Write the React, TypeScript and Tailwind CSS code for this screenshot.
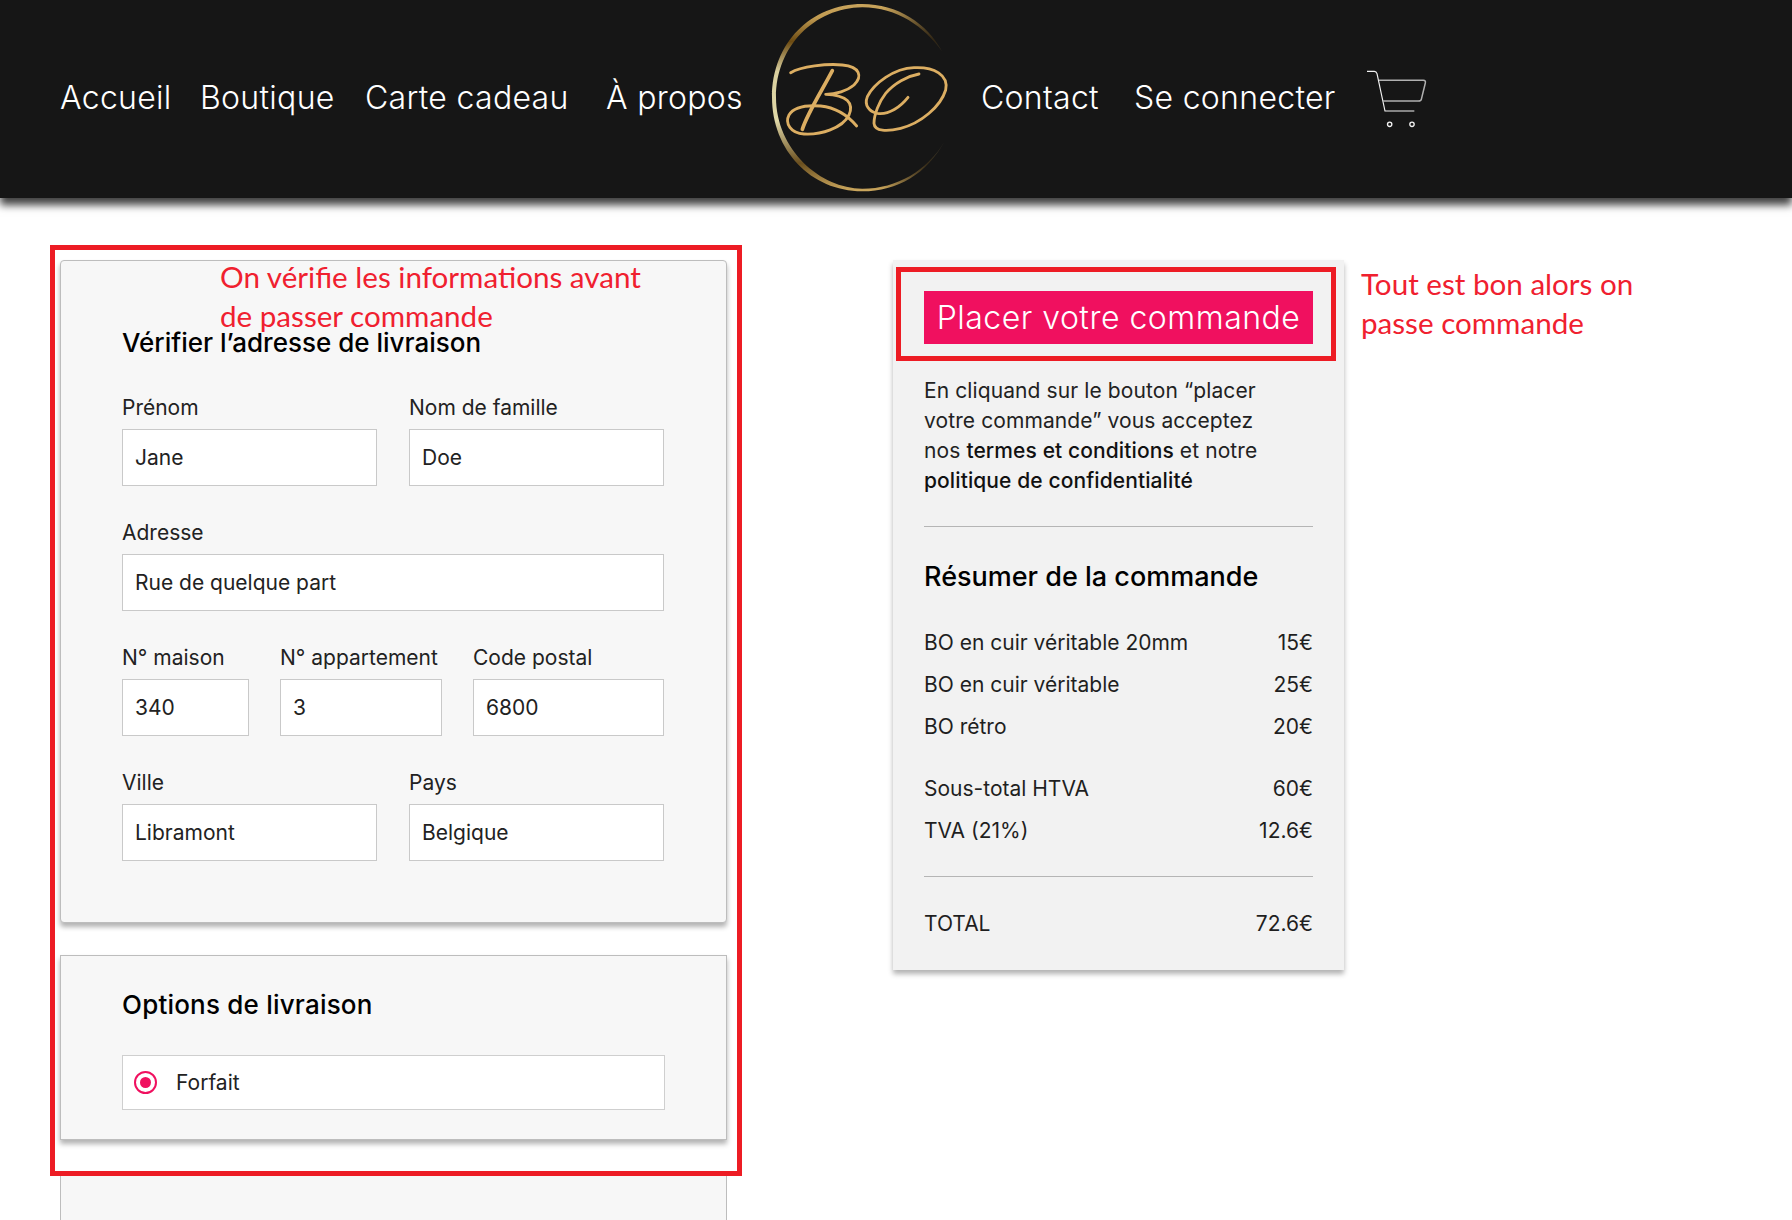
import React from 'react';

const Logo = () => (
  <svg width="200" height="198" viewBox="0 0 600 594" fill="none" aria-label="Logo BO" className="shrink-0">
    <defs>
      <linearGradient id="ring" gradientUnits="userSpaceOnUse" x1="0" y1="12" x2="0" y2="574">
        <stop offset="0" stopColor="#c9a45c" />
        <stop offset="0.07" stopColor="#c29c52" />
        <stop offset="0.2" stopColor="#6b4a12" />
        <stop offset="0.36" stopColor="#d9cf9e" />
        <stop offset="0.62" stopColor="#e0d8a8" />
        <stop offset="0.85" stopColor="#6a4f1f" />
        <stop offset="1" stopColor="#cda95f" />
      </linearGradient>
      <linearGradient id="fade" gradientUnits="userSpaceOnUse" x1="360" y1="0" x2="545" y2="0">
        <stop offset="0" stopColor="#fff" />
        <stop offset="1" stopColor="#fff" stopOpacity="0.15" />
      </linearGradient>
      <mask id="ringMask" maskUnits="userSpaceOnUse" x="0" y="0" width="600" height="594">
        <rect width="600" height="594" fill="url(#fade)" />
      </mask>
    </defs>
    <path
      mask="url(#ringMask)"
      fill="url(#ring)"
      d="M535 155 C490 70 400 12 295 12 C140 12 24 130 24 292 C24 450 140 574 295 574 C400 574 490 520 541 425 C490 510 400 566 295 566 C170 566 36 450 36 292 C36 140 150 24 295 22 C400 22 480 80 535 155Z"
    />
    <g stroke="#dcae62" strokeLinecap="round" strokeLinejoin="round">
      <path strokeWidth="8.5" d="M80 218 C110 200 190 190 235 195 C290 200 295 230 270 255 C250 272 215 283 185 283 C250 285 270 310 255 345 C235 385 170 405 120 402 C80 400 62 370 75 345 C90 320 130 315 170 318 C210 322 250 345 278 378" />
      <path strokeWidth="11" d="M205 212 C175 270 130 340 115 388" />
      <path strokeWidth="8.5" d="M465 222 C430 228 390 250 365 280 C345 305 330 345 330 370 C332 395 370 395 410 385 C470 370 530 320 545 270 C555 225 510 200 450 203 C390 205 330 250 310 290 C300 315 315 335 340 340 C375 345 410 320 432 292" />
    </g>
  </svg>
);

const Cart = () => (
  <svg width="85" height="75" viewBox="0 0 255 225" fill="none" className="shrink-0">
    <path d="M36 31 H58 Q64 31 66 38 L90 150 H178" stroke="#f2f2f2" strokeWidth="3.5" />
    <path d="M72 58 H205 Q213 58 211 66 L199 115 Q198 120 190 120 H84" stroke="#b0b0b0" strokeWidth="4.5" />
    <circle cx="104" cy="190" r="6.5" stroke="#f2f2f2" strokeWidth="4" />
    <circle cx="171" cy="190" r="6.5" stroke="#f2f2f2" strokeWidth="4" />
  </svg>
);

const Field = ({ label, value, className }: { label: string; value: string; className: string }) => (
  <label className={`block ${className}`}>
    <span className="block h-[30px] whitespace-nowrap text-[21px] leading-[30px] text-[#222]">{label}</span>
    <input
      readOnly
      value={value}
      className="mt-[6px] block h-[57px] w-full border border-[#c9c9c9] bg-white px-[12px] text-[21px] text-[#222] outline-none"
    />
  </label>
);

const Row = ({ label, price }: { label: string; price: string }) => (
  <div className="flex justify-between text-[21px] leading-[30px] text-[#1f1f1f]">
    <span>{label}</span>
    <span>{price}</span>
  </div>
);

const App = () => {
  return (
    <div className="relative h-[1220px] overflow-hidden bg-white font-['Inter',sans-serif]">
      <header className="relative z-10 flex h-[198px] items-center bg-[#161616] pl-[60px] text-[32px] font-light tracking-[0.3px] text-white shadow-[0_7px_8px_rgba(0,0,0,0.75)]">
        <nav className="flex items-center gap-[32px] whitespace-nowrap pb-[2px]">
          <a className="w-[108px]">Accueil</a>
          <a className="w-[133px]">Boutique</a>
          <a className="w-[209px]">Carte cadeau</a>
          <a className="w-[133px]">À propos</a>
        </nav>
        <div className="ml-[25px]">
          <Logo />
        </div>
        <nav className="ml-[17px] flex items-center gap-[31px] whitespace-nowrap pb-[2px]">
          <a className="w-[122px]">Contact</a>
          <a className="w-[198px]">Se connecter</a>
        </nav>
        <div className="ml-[23px] -mt-[2px]">
          <Cart />
        </div>
      </header>

      <main className="relative flex items-start pl-[60px] pt-[62px]">
        <div className="flex w-[667px] flex-col gap-[32px]">
          <section className="rounded-[4px] border border-[#bdbdbd] bg-[#f7f7f7] pl-[61px] pr-[62px] pt-[64px] pb-[61px] shadow-[0_4px_5px_rgba(0,0,0,0.3)]">
            <h2 className="mb-[32px] text-[26px] font-medium leading-[36px] text-black">Vérifier l’adresse de livraison</h2>
            <div className="flex flex-col gap-[32px]">
              <div className="flex gap-[32px]">
                <Field label="Prénom" value="Jane" className="flex-1" />
                <Field label="Nom de famille" value="Doe" className="flex-1" />
              </div>
              <Field label="Adresse" value="Rue de quelque part" className="w-full" />
              <div className="flex gap-[31px]">
                <Field label="N° maison" value="340" className="w-[127px]" />
                <Field label="N° appartement" value="3" className="w-[162px]" />
                <Field label="Code postal" value="6800" className="flex-1" />
              </div>
              <div className="flex gap-[32px]">
                <Field label="Ville" value="Libramont" className="flex-1" />
                <Field label="Pays" value="Belgique" className="flex-1" />
              </div>
            </div>
          </section>

          <section className="border border-[#bdbdbd] bg-[#f7f7f7] pl-[61px] pr-[61px] pt-[31px] pb-[29px] shadow-[0_4px_5px_rgba(0,0,0,0.3)]">
            <h2 className="mb-[32px] text-[26px] font-medium leading-[36px] tracking-[0.2px] text-black">Options de livraison</h2>
            <div className="flex h-[55px] items-center gap-[19px] border border-[#cfcfcf] bg-white pl-[11px] text-[21px] text-[#222]">
              <span className="flex h-[23px] w-[23px] items-center justify-center rounded-full border-2 border-[#f0105f]">
                <span className="h-[11px] w-[11px] rounded-full bg-[#f0105f]" />
              </span>
              Forfait
            </div>
          </section>

          <section className="h-[100px] border border-[#bdbdbd] bg-[#f7f7f7]" />
        </div>

        <aside className="ml-[166px] w-[451px] bg-[#f2f2f2] px-[31px] pt-[31px] pb-[31px] shadow-[0_4px_5px_rgba(0,0,0,0.3)]">
          <button className="h-[53px] w-full bg-[#f0105f] text-[32px] font-light tracking-[0.5px] text-white">Placer votre commande</button>
          <p className="mt-[32px] text-[21px] leading-[30px] tracking-[0.1px] text-[#222]">
            En cliquand sur le bouton “placer
            <br />
            votre commande” vous acceptez
            <br />
            nos <span className="font-medium text-[#111]">termes et conditions</span> et notre
            <br />
            <span className="font-medium text-[#111]">politique de confidentialité</span>
          </p>
          <div className="mt-[30px] border-t border-[#b5b5b5]" />
          <h2 className="mt-[32px] text-[27px] font-medium leading-[36px] text-black">Résumer de la commande</h2>
          <div className="mt-[33px] flex flex-col gap-[12px]">
            <Row label="BO en cuir véritable 20mm" price="15€" />
            <Row label="BO en cuir véritable" price="25€" />
            <Row label="BO rétro" price="20€" />
          </div>
          <div className="mt-[32px] flex flex-col gap-[12px]">
            <Row label="Sous-total HTVA" price="60€" />
            <Row label="TVA (21%)" price="12.6€" />
          </div>
          <div className="mt-[30px] border-t border-[#b5b5b5]" />
          <div className="mt-[32px]">
            <Row label="TOTAL" price="72.6€" />
          </div>
        </aside>

        {/* annotations posees par dessus la page */}
        <div className="pointer-events-none absolute left-[50px] top-[47px] h-[931px] w-[692px] border-[5px] border-[#ed1c24]" />
        <p className="absolute left-[220px] top-[60px] font-['Lato',sans-serif] text-[29.6px] leading-[38.5px] text-[#f0202f]">
          On vérifie les informations avant
          <br />
          de passer commande
        </p>
        <div className="pointer-events-none absolute left-[896px] top-[69px] h-[94px] w-[440px] border-[5px] border-[#ed1c24]" />
        <p className="absolute left-[1361px] top-[67px] font-['Lato',sans-serif] text-[29.6px] leading-[38.5px] text-[#f0202f]">
          Tout est bon alors on
          <br />
          passe commande
        </p>
      </main>
    </div>
  );
};

export default App;
